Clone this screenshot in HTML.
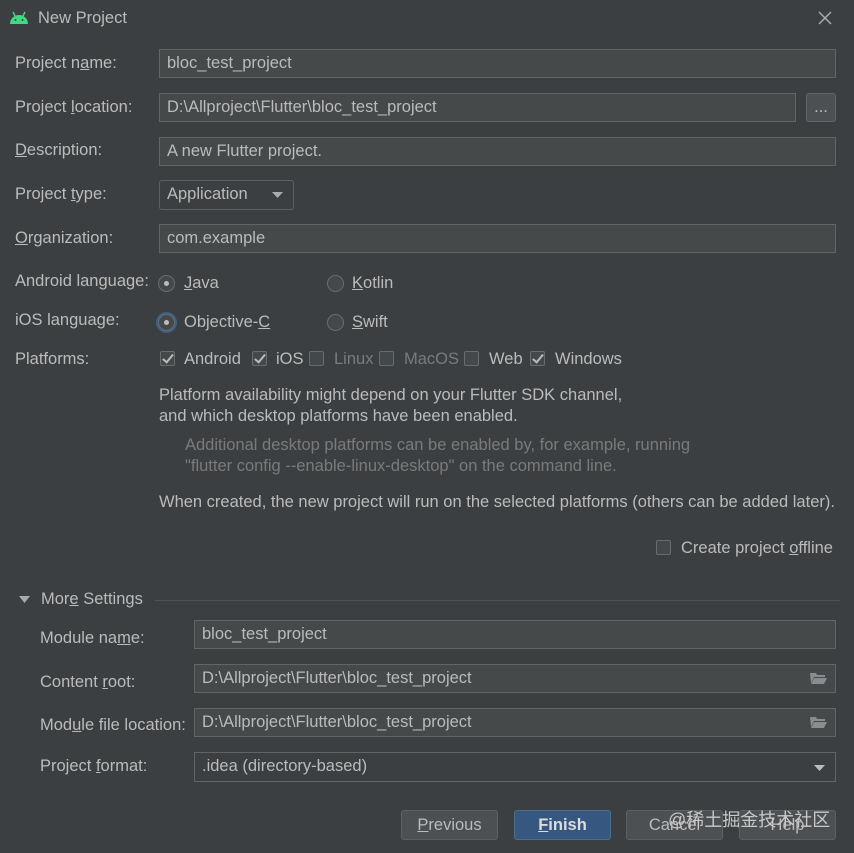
<!DOCTYPE html>
<html><head><meta charset="utf-8"><style>
body{margin:0;width:854px;height:853px;background:#3c3f41;font-family:"Liberation Sans","Noto Sans CJK SC",sans-serif;font-size:16.5px;color:#bbbbbb;position:relative;overflow:hidden}
.a{position:absolute;white-space:nowrap}
.f{position:absolute;background:#45494a;border:1px solid #646464;box-sizing:border-box;height:29px;line-height:27px;padding-left:7px;color:#bbbbbb}
.l{position:absolute;left:15px;white-space:nowrap}
.cb{position:absolute;width:15px;height:15px;border:1px solid #6b6b6b;background:#43494a;box-sizing:border-box;border-radius:2px}
.cb.on::after{content:"";position:absolute;left:4px;top:0px;width:4px;height:9px;border:solid #bbb;border-width:0 2px 2px 0;transform:rotate(40deg)}
.rb{position:absolute;width:17px;height:17px;border:1px solid #6b6b6b;background:#43494a;border-radius:50%;box-sizing:border-box}
.rb.on::after{content:"";position:absolute;left:5px;top:5px;width:5px;height:5px;border-radius:50%;background:#bbb}
.btn{position:absolute;top:810px;height:30px;width:97px;border:1px solid #5e6060;background:#4c5052;border-radius:3px;box-sizing:border-box;text-align:center;line-height:28px}
u{text-decoration:underline}
.dis{color:#7a7a7a}
.fold{position:absolute;right:8px;top:7px;width:17px;height:12px}
</style></head><body>
<svg class="a" style="left:9px;top:11px" width="20" height="14" viewBox="0 0 20 14"><path d="M1 13 A9 9 0 0 1 19 13 Z" fill="#3ddc84"/><line x1="4" y1="1" x2="6" y2="5" stroke="#3ddc84" stroke-width="1.5"/><line x1="16" y1="1" x2="14" y2="5" stroke="#3ddc84" stroke-width="1.5"/><circle cx="6.5" cy="9" r="1" fill="#3c3f41"/><circle cx="13.5" cy="9" r="1" fill="#3c3f41"/></svg>
<div class="a" style="left:38px;top:9px">New Project</div>
<svg class="a" style="left:818px;top:11px" width="14" height="14"><path d="M1 1L13 13M13 1L1 13" stroke="#aaa" stroke-width="1.5"/></svg>

<div class="l" style="top:54px">Project n<u>a</u>me:</div>
<div class="f" style="left:159px;top:49px;width:677px">bloc_test_project</div>
<div class="l" style="top:98px">Project <u>l</u>ocation:</div>
<div class="f" style="left:159px;top:93px;width:637px">D:\Allproject\Flutter\bloc_test_project</div>
<div class="f" style="left:806px;top:93px;width:30px;padding:0;text-align:center;background:#4c5052;border-radius:3px">...</div>
<div class="l" style="top:141px"><u>D</u>escription:</div>
<div class="f" style="left:159px;top:137px;width:677px">A new Flutter project.</div>
<div class="l" style="top:185px">Project <u>t</u>ype:</div>
<div class="f" style="left:159px;top:180px;width:135px;height:30px;background:#3c3f41;border-radius:3px;border-color:#5e6060">Application<svg style="position:absolute;right:10px;top:11px" width="11" height="7"><path d="M0 0H11L5.5 6Z" fill="#aaa"/></svg></div>
<div class="l" style="top:229px"><u>O</u>rganization:</div>
<div class="f" style="left:159px;top:224px;width:677px">com.example</div>

<div class="l" style="top:272px">Android language:</div>
<div class="rb on" style="left:158px;top:275px"></div><div class="a" style="left:184px;top:274px"><u>J</u>ava</div>
<div class="rb" style="left:327px;top:275px"></div><div class="a" style="left:352px;top:274px"><u>K</u>otlin</div>
<div class="l" style="top:311px">iOS language:</div>
<div class="rb on" style="left:158px;top:314px;box-shadow:0 0 0 2px #3d6185"></div><div class="a" style="left:184px;top:313px">Objective-<u>C</u></div>
<div class="rb" style="left:327px;top:314px"></div><div class="a" style="left:352px;top:313px"><u>S</u>wift</div>
<div class="l" style="top:350px">Platforms:</div>
<div class="cb on" style="left:160px;top:351px"></div><div class="a" style="left:184px;top:350px">Android</div>
<div class="cb on" style="left:252px;top:351px"></div><div class="a" style="left:276px;top:350px">iOS</div>
<div class="cb" style="left:309px;top:351px"></div><div class="a dis" style="left:334px;top:350px">Linux</div>
<div class="cb" style="left:379px;top:351px"></div><div class="a dis" style="left:404px;top:350px">MacOS</div>
<div class="cb" style="left:464px;top:351px"></div><div class="a" style="left:489px;top:350px">Web</div>
<div class="cb on" style="left:530px;top:351px"></div><div class="a" style="left:555px;top:350px">Windows</div>

<div class="a" style="left:159px;top:385px;line-height:21px">Platform availability might depend on your Flutter SDK channel,<br>and which desktop platforms have been enabled.</div>
<div class="a dis" style="left:185px;top:435px;line-height:21px">Additional desktop platforms can be enabled by, for example, running<br>"flutter config --enable-linux-desktop" on the command line.</div>
<div class="a" style="left:159px;top:493px">When created, the new project will run on the selected platforms (others can be added later).</div>

<div class="cb" style="left:656px;top:540px"></div><div class="a" style="left:681px;top:539px">Create project <u>o</u>ffline</div>

<svg class="a" style="left:19px;top:596px" width="11" height="8"><path d="M0 0H11L5.5 7Z" fill="#aaa"/></svg>
<div class="a" style="left:41px;top:590px">Mor<u>e</u> Settings</div>
<div class="a" style="left:155px;top:600px;width:685px;height:1px;background:#525252"></div>

<div class="a" style="left:40px;top:629px">Module na<u>m</u>e:</div>
<div class="f" style="left:194px;top:620px;width:642px">bloc_test_project</div>
<div class="a" style="left:40px;top:673px">Content <u>r</u>oot:</div>
<div class="f" style="left:194px;top:664px;width:642px">D:\Allproject\Flutter\bloc_test_project<svg class="fold" viewBox="0 0 17 12"><path d="M0 1H6L7 3H15V5H4L1 11Z M1 12L4 6H17L14 12Z" fill="#8a8d8f"/></svg></div>
<div class="a" style="left:40px;top:716px">Mod<u>u</u>le file location:</div>
<div class="f" style="left:194px;top:708px;width:642px">D:\Allproject\Flutter\bloc_test_project<svg class="fold" viewBox="0 0 17 12"><path d="M0 1H6L7 3H15V5H4L1 11Z M1 12L4 6H17L14 12Z" fill="#8a8d8f"/></svg></div>
<div class="a" style="left:40px;top:757px">Project <u>f</u>ormat:</div>
<div class="f" style="left:194px;top:752px;width:642px;height:30px;background:#3c3f41">.idea (directory-based)<svg style="position:absolute;right:10px;top:12px" width="11" height="7"><path d="M0 0H11L5.5 6Z" fill="#bbb"/></svg></div>

<div class="btn" style="left:401px"><u>P</u>revious</div>
<div class="btn" style="left:514px;background:#365880;border-color:#4c708c;color:#ddd;font-weight:bold"><u>F</u>inish</div>
<div class="btn" style="left:626px">Cancel</div>
<div class="btn" style="left:739px">Help</div>
<div class="a" style="left:668px;top:806px;font-size:18px;color:#c8c8c8">@稀土掘金技术社区</div>
</body></html>
